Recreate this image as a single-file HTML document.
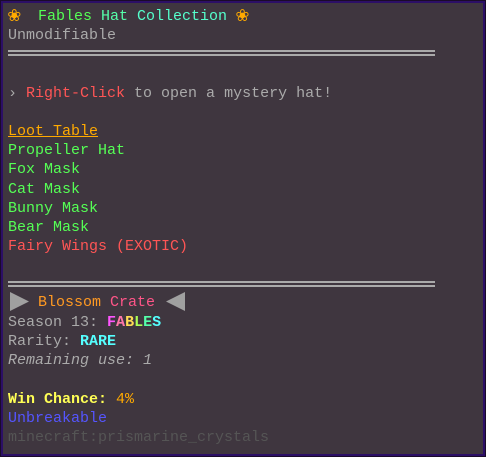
<!DOCTYPE html>
<html><head><meta charset="utf-8"><style>
html,body{margin:0;padding:0;}
body{width:486px;height:457px;background:#1a0b2a;position:relative;overflow:hidden;font-family:"Liberation Mono","DejaVu Sans Mono",monospace;font-size:15px;}
.box{position:absolute;left:1px;top:1px;width:480px;height:451px;border:2px solid #2c0f66;background:#3f363f;}
.l{position:absolute;left:8px;height:19px;line-height:19px;white-space:pre;color:#aaa;}
.sep{position:absolute;left:8px;width:427px;height:2px;background:#aaa;}
.g{color:#55ff55}.r{color:#ff5555}.gr{color:#aaa}.o{color:#ffaa00}
b{font-weight:bold}
.fl{display:inline-block;width:30px;font-size:21px;color:#ffaa00;vertical-align:top;line-height:19px}
svg{vertical-align:top}
</style></head><body><div class="box"></div>
<div class="l" style="top:7px"><span class="fl">❀</span><span style="color:#55ff55">Fables </span><span style="color:#55ffaa">Hat </span><span style="color:#55ffcc">Collection</span> <span class="fl">❀</span></div>
<div class="l" style="top:26px">Unmodifiable</div>
<div class="sep" style="top:50px"></div><div class="sep" style="top:54px"></div>
<div class="l" style="top:84px">› <span class="r">Right-Click</span> to open a mystery hat!</div>
<div class="l o" style="top:122px;text-decoration:underline">Loot Table</div>
<div class="l g" style="top:141px">Propeller Hat</div>
<div class="l g" style="top:160px">Fox Mask</div>
<div class="l g" style="top:180px">Cat Mask</div>
<div class="l g" style="top:199px">Bunny Mask</div>
<div class="l g" style="top:218px">Bear Mask</div>
<div class="l r" style="top:237px">Fairy Wings (EXOTIC)</div>
<div class="sep" style="top:281px"></div><div class="sep" style="top:285px"></div>
<svg style="position:absolute;left:10px;top:292px" width="19" height="19"><polygon points="0,0 19,9.5 0,19" fill="#a0a0a0"/></svg>
<div class="l" style="top:293px;left:38px"><span style="color:#ff9922">Blossom </span><span style="color:#ff5588">Crate</span></div>
<svg style="position:absolute;left:166px;top:292px" width="19" height="19"><polygon points="19,0 0,9.5 19,19" fill="#a0a0a0"/></svg>
<div class="l" style="top:313px">Season 13: <b style="color:#ff55ff">F</b><b style="color:#ff77aa">A</b><b style="color:#ffdd55">B</b><b style="color:#aaff55">L</b><b style="color:#55ffaa">E</b><b style="color:#55ffff">S</b></div>
<div class="l" style="top:332px">Rarity: <b style="color:#55ffff">RARE</b></div>
<div class="l" style="top:351px;font-style:italic">Remaining use: 1</div>
<div class="l" style="top:390px"><b style="color:#ffff55">Win Chance:</b> <span class="o">4%</span></div>
<div class="l" style="top:409px;color:#5555ff">Unbreakable</div>
<div class="l" style="top:428px;color:#555">minecraft:prismarine_crystals</div>
</body></html>
